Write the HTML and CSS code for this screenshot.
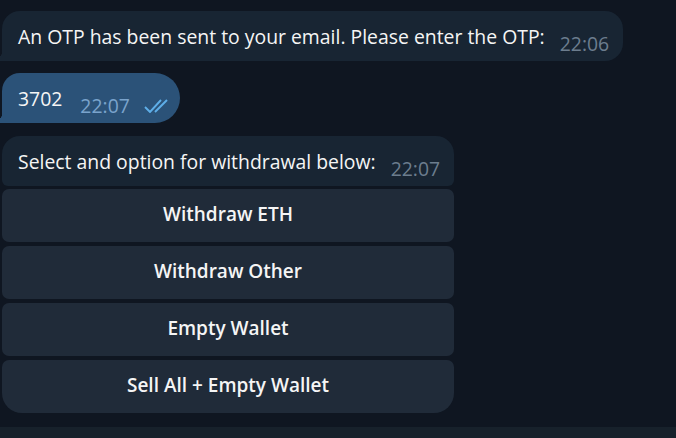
FILE: index.html
```html
<!DOCTYPE html>
<html lang="en">
<head>
    <meta charset="UTF-8">
    <meta name="viewport" content="width=device-width, initial-scale=1.0">
    <title>Chat</title>
    <link rel="stylesheet" href="styles.css">
</head>
<body>
    <div class="chat">
        <div class="bubble in wide">
            <span class="text">An OTP has been sent to your email. Please enter the OTP:</span>
            <span class="time">22:06</span>
        </div>

        <div class="bubble out">
            <span class="text">3702</span>
            <span class="time">22:07</span>
            <svg class="checks" width="28" height="14" viewBox="0 0 28 14">
                <path d="M1 8 L6 13 L17 1" fill="none" stroke="#5eaee8" stroke-width="1.9"/>
                <path d="M11 13 L23 1" fill="none" stroke="#5eaee8" stroke-width="1.9"/>
            </svg>
        </div>

        <div class="group">
            <div class="bubble in keyboard">
                <span class="text">Select and option for withdrawal below:</span>
                <span class="time">22:07</span>
            </div>
            <div class="buttons">
                <button class="kb-btn">Withdraw ETH</button>
                <button class="kb-btn">Withdraw Other</button>
                <button class="kb-btn">Empty Wallet</button>
                <button class="kb-btn last">Sell All + Empty Wallet</button>
            </div>
        </div>
    </div>
    <div class="composer"></div>
</body>
</html>
```

FILE: styles.css
```css
body {
    margin: 0;
    height: 438px;
    overflow: hidden;
    background-color: #0f1621;
    font-family: "Open Sans", sans-serif;
    color: #f5f5f5;
    display: flex;
    flex-direction: column;
}
.chat {
    flex: 1;
    display: flex;
    flex-direction: column;
    align-items: flex-start;
    padding-top: 11px;
}
.bubble {
    position: relative;
    display: flex;
    align-items: flex-end;
    height: 50px;
    box-sizing: border-box;
    margin-left: 2px;
    padding: 0 14px 0 16px;
    border-radius: 18px 18px 18px 0;
    font-size: 19.4px;
    white-space: nowrap;
}
.bubble::before {
    content: "";
    position: absolute;
    left: -8px;
    bottom: 0;
    width: 8px;
    height: 10px;
    background: radial-gradient(circle at 0 0, transparent 8px, var(--bg) 8.5px);
}
.in {
    --bg: #182533;
    background-color: #182533;
}
.out {
    --bg: #2b5278;
    background-color: #2b5278;
    margin-top: 12px;
    padding-right: 8px;
    border-radius: 18px 25px 25px 0;
}
.text {
    padding-bottom: 11px;
    line-height: 26px;
}
.time {
    color: #6c7d8e;
    margin-left: 15px;
    padding-bottom: 4px;
    line-height: 26px;
}
.out .time {
    color: #7aa3cc;
    margin-left: 18px;
}
.checks {
    margin: 0 0 10px 14px;
}
.group {
    margin-top: 13px;
    margin-left: 2px;
    width: 452px;
}
.keyboard {
    margin-left: 0;
    border-radius: 18px 18px 6px 6px;
    justify-content: space-between;
}
.keyboard::before {
    display: none;
}
.buttons {
    display: flex;
    flex-direction: column;
    gap: 4px;
    margin-top: 3px;
}
.kb-btn {
    height: 53px;
    border: none;
    border-radius: 7px;
    background-color: #202b39;
    color: #f5f5f5;
    font-family: "Open Sans", sans-serif;
    font-weight: 600;
    font-size: 19px;
    padding: 0 0 4px;
}
.kb-btn.last {
    border-radius: 7px 7px 20px 20px;
}
.composer {
    height: 11px;
    background-color: #17212b;
}
```
